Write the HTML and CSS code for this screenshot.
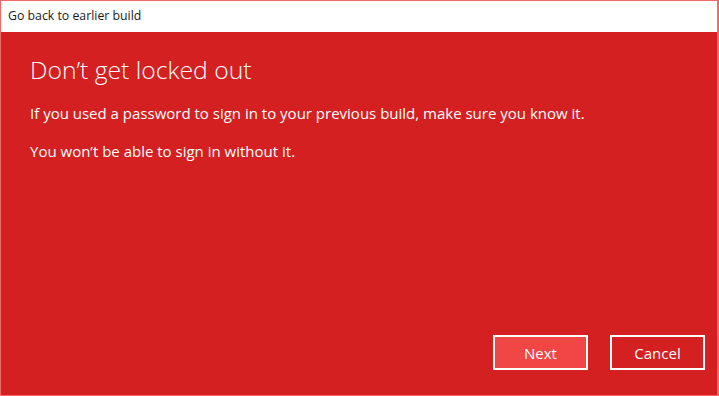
FILE: index.html
```html
<!DOCTYPE html>
<html lang="en">
<head>
  <meta charset="UTF-8">
  <meta name="viewport" content="width=device-width, initial-scale=1.0">
  <title>Go back to earlier build</title>
  <link rel="stylesheet" href="styles.css">
</head>
<body>
  <div class="window">
    <div class="title-bar">Go back to earlier build</div>
    <div class="content">
      <h1>Don’t get locked out</h1>
      <p>If you used a password to sign in to your previous build, make sure you know it.</p>
      <p>You won’t be able to sign in without it.</p>
      <div class="buttons">
        <button class="btn btn-next">Next</button>
        <button class="btn btn-cancel">Cancel</button>
      </div>
    </div>
  </div>
</body>
</html>
```

FILE: styles.css
```css
html, body {
  margin: 0;
  height: 100%;
}
body {
  font-family: "Open Sans", "Noto Sans", sans-serif;
  background-color: #d42020;
}
.window {
  height: 100%;
  box-sizing: border-box;
  display: flex;
  flex-direction: column;
  border: 1px solid #f06a6a;
  border-right-width: 2px;
}
.title-bar {
  height: 31px;
  flex-shrink: 0;
  box-sizing: border-box;
  background-color: #fff;
  color: #1a1a1a;
  font-size: 12.3px;
  padding: 6px 0 0 7px;
}
.content {
  flex: 1;
  display: flex;
  flex-direction: column;
  padding: 22px 12px 25px 29px;
  background-color: #d42020;
  color: #fff;
}
h1 {
  margin: 0 0 17px;
  font-size: 24.7px;
  font-weight: 300;
  line-height: 32px;
}
p {
  margin: 0 0 17px;
  font-size: 15px;
  line-height: 21px;
}
.buttons {
  margin-top: auto;
  display: flex;
  justify-content: flex-end;
  gap: 22px;
}
.btn {
  width: 95px;
  height: 35px;
  border: 2px solid #fff;
  color: #fff;
  font-family: inherit;
  font-size: 15px;
  padding: 0;
  cursor: pointer;
}
.btn-next {
  background-color: #f04646;
}
.btn-cancel {
  background-color: #d42020;
}
```
